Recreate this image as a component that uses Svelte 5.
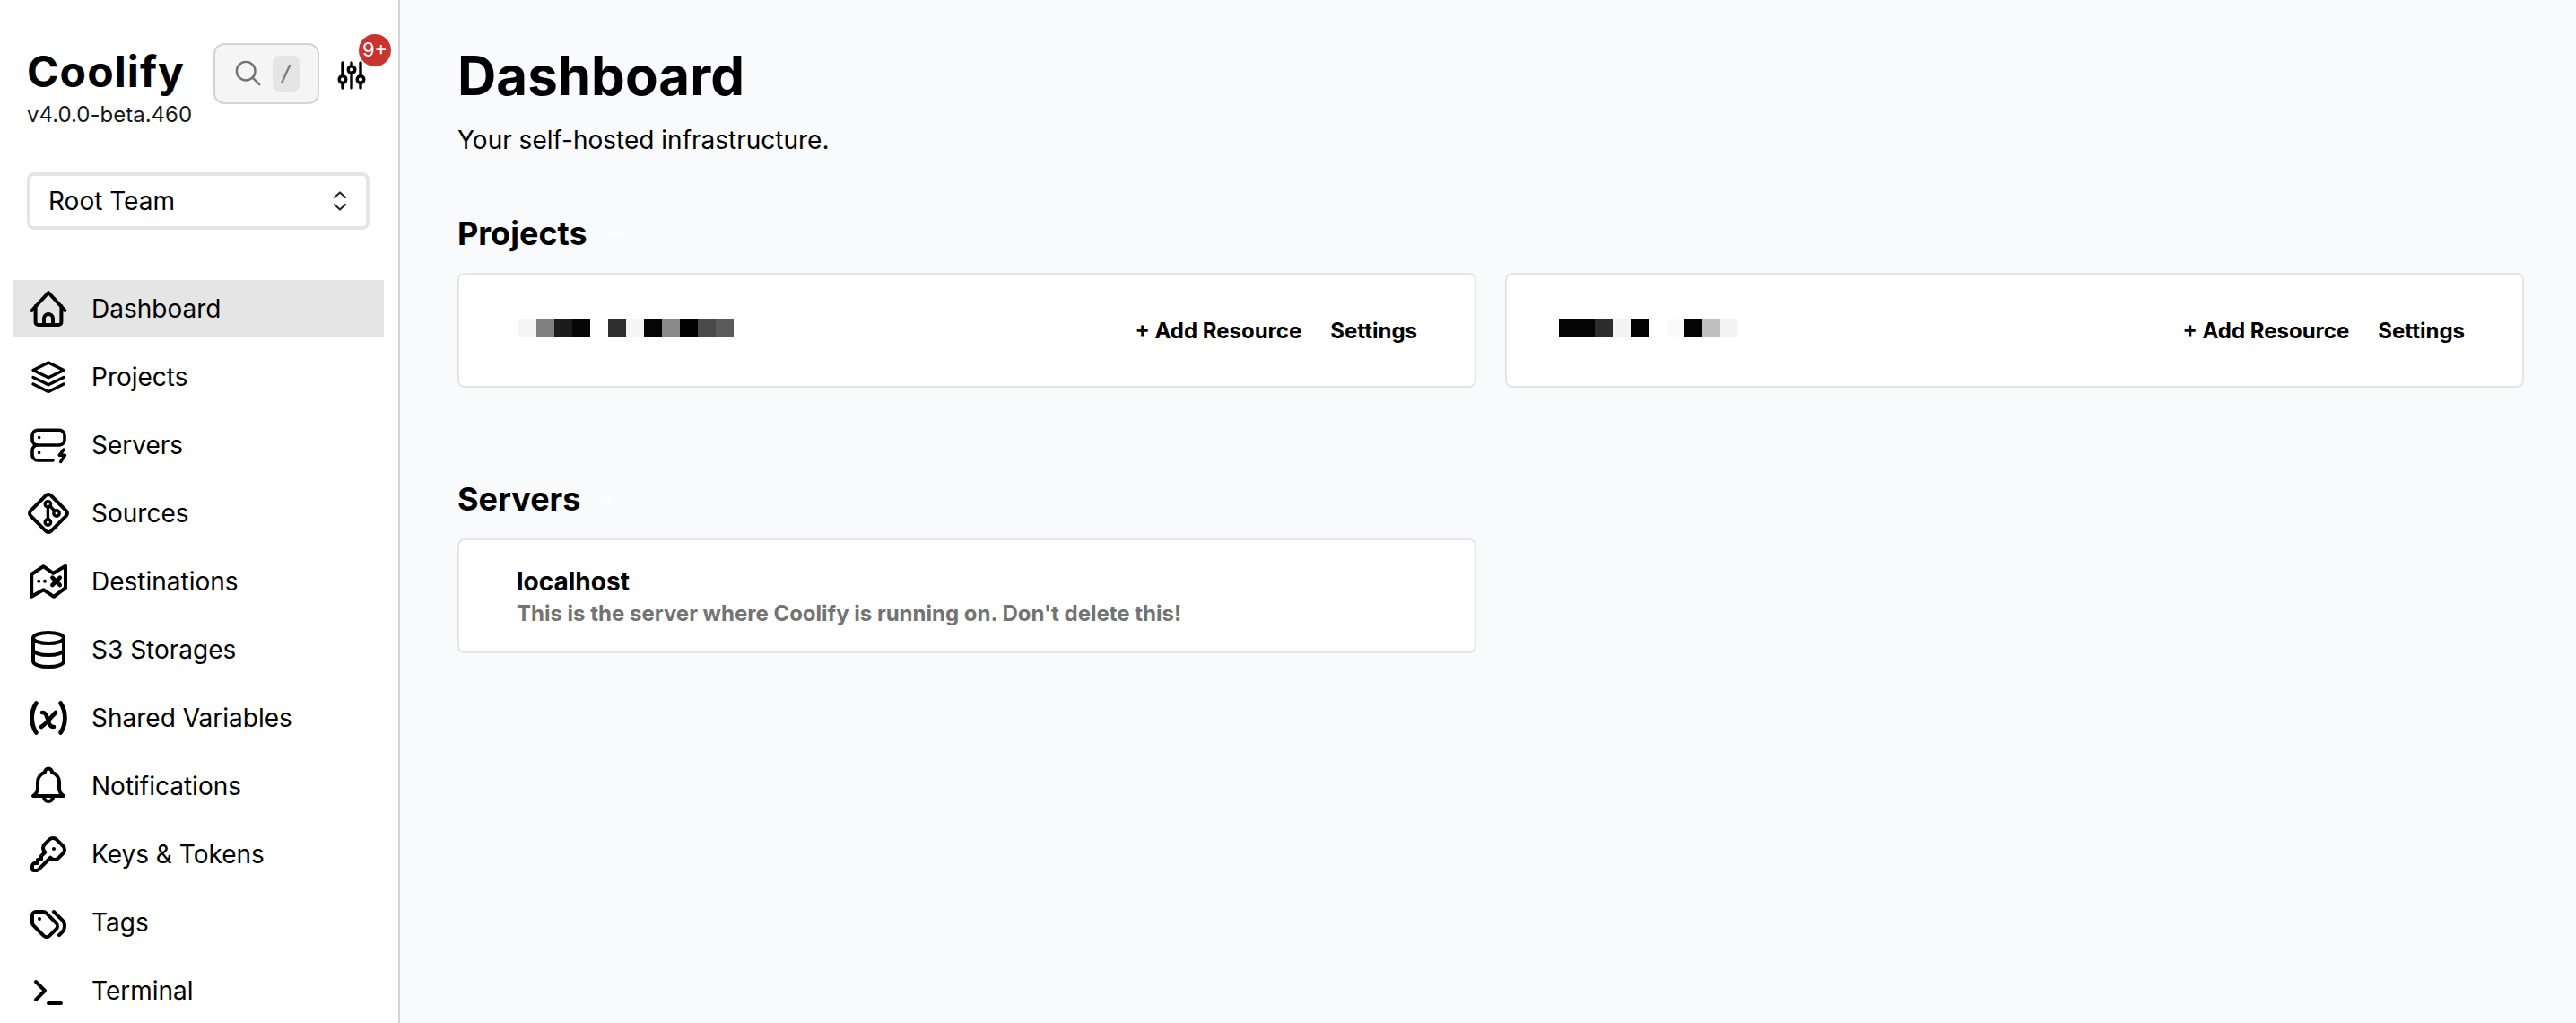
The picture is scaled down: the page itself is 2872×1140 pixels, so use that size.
<script>
  const projectCards = [
    { offset: 2, cells: ['#f5f5f5', '#808080', '#1c1c1c', '#060606', '#ffffff', '#2e2e2e', '#f5f5f5', '#060606', '#8a8a8a', '#020202', '#4a4a4a', '#5a5a5a'] },
    { offset: -6, cells: ['#050505', '#050505', '#2c2c2c', '#f4f4f4', '#030303', '#ffffff', '#fafafa', '#040404', '#c0c0c0', '#f4f4f4'] }
  ];

  const menu = [
    { label: 'Dashboard', icon: 'home', active: true },
    { label: 'Projects', icon: 'layers' },
    { label: 'Servers', icon: 'server' },
    { label: 'Sources', icon: 'git' },
    { label: 'Destinations', icon: 'map' },
    { label: 'S3 Storages', icon: 'db' },
    { label: 'Shared Variables', icon: 'vars' },
    { label: 'Notifications', icon: 'bell' },
    { label: 'Keys & Tokens', icon: 'key' },
    { label: 'Tags', icon: 'tags' },
    { label: 'Terminal', icon: 'terminal' }
  ];
</script>

<div class="page">
  <aside class="sidebar">
    <div class="brand-row">
      <div class="brand">
        <div class="logo">Coolify</div>
        <div class="version">v4.0.0-beta.460</div>
      </div>
      <div class="search">
        <svg class="search-icon" viewBox="0 0 32 32" fill="none" stroke="currentColor" stroke-width="2.6" stroke-linecap="round">
          <circle cx="13" cy="13" r="11" />
          <path d="M21 21L29 29" />
        </svg>
        <kbd>/</kbd>
      </div>
      <div class="settings">
        <svg viewBox="0 0 32 32" fill="none" stroke="currentColor" stroke-width="3.4" stroke-linecap="round">
          <path d="M6 2v14M6 25v5M16 2v3M16 14v16M26 2v14M26 25v5" />
          <circle cx="6" cy="20.500" r="3.800" />
          <circle cx="16" cy="9.500" r="3.800" />
          <circle cx="26" cy="20.500" r="3.800" />
        </svg>
        <span class="badge">9+</span>
      </div>
    </div>

    <div class="team-select">
      <span>Root Team</span>
      <svg viewBox="0 0 16 24" fill="none" stroke="currentColor" stroke-width="2.2" stroke-linecap="round" stroke-linejoin="round">
        <path d="M2 8l6-5.500L14 8M2 16l6 5.500L14 16" />
      </svg>
    </div>

    <nav class="menu">
      {#each menu as item}
        <div class="menu-item" class:active={item.active}>
          <svg class="menu-icon" viewBox="0 0 24 24" fill="none" stroke="currentColor" stroke-width="2" stroke-linecap="round" stroke-linejoin="round">
            {#if item.icon === 'home'}
              <path d="M2.800 13L12 3l9.200 10M4.800 10.500V19.500a1.500 1.500 0 0 0 1.500 1.500h11.400a1.500 1.500 0 0 0 1.500-1.500V10.500" />
              <path d="M9.500 21v-3.500a2.500 2.500 0 0 1 5 0V21" />
            {:else if item.icon === 'layers'}
              <g stroke-width="1.700">
                <path d="M12 4l8.500 4.200L12 12.400 3.500 8.200z" />
                <path d="M3.500 12.200l8.500 4.200 8.500-4.200M3.500 16l8.500 4.200 8.500-4.200" />
              </g>
            {:else if item.icon === 'server'}
              <g stroke-width="1.800">
                <rect x="3" y="3.600" width="18" height="8.400" rx="3" />
                <path d="M14.500 20.500H6a3 3 0 0 1-3-3V15a3 3 0 0 1 3-3" />
                <path d="M6.800 7.800h.01M6.800 16.200h.01" />
                <path d="M20.500 14.600l-2.300 3h3l-2.300 3.600" />
              </g>
            {:else if item.icon === 'git'}
              <rect x="4" y="4" width="16" height="16" rx="2" transform="rotate(45 12 12)" />
              <g stroke-width="1.700">
                <circle cx="11.700" cy="6.900" r="1.600" />
                <circle cx="16.500" cy="12" r="1.600" />
                <circle cx="11.700" cy="17" r="1.600" />
                <path d="M11.700 8.500v6.900M12.900 8l2.600 2.700" />
              </g>
            {:else if item.icon === 'map'}
              <path d="M2.600 8L9.200 3.600l5.500 3.800 6.800-4v12.200L15 20.400l-5.800-3.800-6.600 3.800z" />
              <path d="M6.600 11.900h.01M10 11.900h.01" />
              <path d="M14.200 9.800l4.200 4.200M18.400 9.800l-4.200 4.200" stroke-width="2.300" />
            {:else if item.icon === 'db'}
              <ellipse cx="12" cy="5.500" rx="8.500" ry="3" />
              <path d="M3.500 5.500v13c0 1.700 3.800 3 8.500 3s8.500-1.300 8.500-3v-13" />
              <path d="M3.500 12c0 1.700 3.800 3 8.500 3s8.500-1.300 8.500-3" />
            {:else if item.icon === 'vars'}
              <g stroke-width="2.400">
                <path d="M5.200 3.800C2 8.500 2 15.500 5.200 20.200M18.800 3.800c3.200 4.700 3.200 11.700 0 16.400" />
                <path d="M8.500 9c1.600 0 2 .5 2.500 2l1.400 4c.5 1.500 1 2 2.600 2M8 17c3-2 5-5 8-8" stroke-width="2.300" />
              </g>
            {:else if item.icon === 'bell'}
              <path d="M3.500 17.500h17c-1.600-1-2.500-2.600-2.500-4.500v-3a6 6 0 0 0-4-5.700 2 2 0 0 0-4 0A6 6 0 0 0 6 10v3c0 1.900-.9 3.500-2.500 4.500z" />
              <path d="M9.500 17.500v.5a2.500 2.500 0 0 0 5 0v-.5" />
            {:else if item.icon === 'key'}
              <path d="M16.555 3.843l3.602 3.602a2.877 2.877 0 0 1 0 4.069l-2.643 2.643a2.877 2.877 0 0 1-4.069 0l-.301-.301-6.558 6.558a2 2 0 0 1-1.239.578l-.175.008h-1.172a1 1 0 0 1-.993-.883l-.007-.117v-1.172a2 2 0 0 1 .467-1.284l.119-.119.415-.415h2v-2h2v-2l2.144-2.144-.301-.301a2.877 2.877 0 0 1 0-4.069l2.643-2.643a2.877 2.877 0 0 1 4.069 0z" />
              <path d="M15 9h.01" />
            {:else if item.icon === 'tags'}
              <path d="M3 8v4.172a2 2 0 0 0 .586 1.414l5.710 5.710a2.410 2.410 0 0 0 3.408 0l3.592-3.592a2.410 2.410 0 0 0 0-3.408l-5.710-5.710a2 2 0 0 0-1.414-.586h-4.172a2 2 0 0 0-2 2z" />
              <path d="M18 19l1.592-1.592a4.820 4.820 0 0 0 0-6.816l-4.592-4.592" />
              <path d="M7 10h-.01" />
            {:else if item.icon === 'terminal'}
              <path d="M5 7l5 5-5 5" />
              <path d="M12 19h7" />
            {/if}
          </svg>
          <span>{item.label}</span>
        </div>
      {/each}
    </nav>
  </aside>

  <main class="content">
    <h1>Dashboard</h1>
    <p class="subtitle">Your self-hosted infrastructure.</p>

    <section class="projects">
      <div class="section-title">
        <h2>Projects</h2>
        <svg class="plus" viewBox="0 0 20 20" fill="none" stroke="currentColor" stroke-width="1.500"><path d="M10 2v16M2 10h16" /></svg>
      </div>
      <div class="grid">
        {#each projectCards as card}
          <div class="card project">
            <div class="redacted" style="margin-left: {card.offset}px">
              {#each card.cells as color}
                <i style="background: {color}"></i>
              {/each}
            </div>
            <div class="actions">
              <span>+ Add Resource</span>
              <span>Settings</span>
            </div>
          </div>
        {/each}
      </div>
    </section>

    <section class="servers">
      <div class="section-title">
        <h2>Servers</h2>
        <svg class="plus" viewBox="0 0 20 20" fill="none" stroke="currentColor" stroke-width="1.500"><path d="M10 2v16M2 10h16" /></svg>
      </div>
      <div class="grid">
        <div class="card server">
          <div class="server-name">localhost</div>
          <div class="server-desc">This is the server where Coolify is running on. Don't delete this!</div>
        </div>
      </div>
    </section>
  </main>
</div>

<style>
  :global(body) {
    margin: 0;
    background: #f9fafb;
  }

  .page {
    display: flex;
    height: 1140px;
    overflow: hidden;
    font-family: Inter, "Liberation Sans", sans-serif;
    color: #000;
  }

  .sidebar {
    width: 446px;
    flex: none;
    box-sizing: border-box;
    background: #fff;
    border-right: 2px solid #d4d4d4;
    padding: 48px 16px 0 14px;
  }

  .brand-row {
    display: flex;
    align-items: flex-start;
    padding-left: 17px;
    height: 144px;
  }

  .brand {
    width: 207px;
    flex: none;
    padding-top: 5px;
  }

  .logo {
    font-size: 48px;
    font-weight: 700;
    line-height: 54px;
    letter-spacing: 1.1px;
    margin-left: -1px;
  }

  .version {
    font-size: 24px;
    line-height: 34px;
    color: #171717;
    margin: 4px 0 0 -1px;
  }

  .search {
    width: 118px;
    height: 68px;
    flex: none;
    box-sizing: border-box;
    display: flex;
    align-items: center;
    gap: 12px;
    padding-left: 22px;
    background: #f5f5f5;
    border: 2px solid #d4d4d4;
    border-radius: 12px;
    color: #737373;
  }

  .search-icon {
    width: 30px;
    height: 30px;
    flex: none;
  }

  kbd {
    width: 30px;
    height: 40px;
    display: flex;
    align-items: center;
    justify-content: center;
    background: #e5e5e5;
    border-radius: 8px;
    font-family: "DejaVu Sans Mono", monospace;
    font-size: 24px;
    font-style: normal;
    color: #737373;
  }

  .settings {
    position: relative;
    margin: 20px 0 0 20px;
    width: 32px;
    height: 32px;
  }

  .settings svg {
    display: block;
    width: 32px;
    height: 32px;
  }

  .badge {
    position: absolute;
    left: 24px;
    top: -30px;
    width: 36px;
    height: 36px;
    border-radius: 50%;
    background: #c9352e;
    color: #fff;
    font-size: 22px;
    line-height: 34px;
    text-align: center;
  }

  .team-select {
    box-sizing: border-box;
    width: 382px;
    height: 64px;
    margin-left: 16px;
    display: flex;
    align-items: center;
    justify-content: space-between;
    padding: 0 21px 0 20px;
    background: #fff;
    border: 4px solid #e5e5e5;
    border-radius: 8px;
    font-size: 28px;
    color: #000;
  }

  .team-select svg {
    width: 16px;
    height: 24px;
    color: #262626;
  }

  .menu {
    margin-top: 56px;
    display: flex;
    flex-direction: column;
    gap: 12px;
  }

  .menu-item {
    height: 64px;
    width: 414px;
    display: flex;
    align-items: center;
    gap: 24px;
    padding-left: 16px;
    box-sizing: border-box;
    font-size: 28px;
    color: #000;
  }

  .menu-item.active {
    background: #e5e5e5;
  }

  .menu-icon {
    width: 48px;
    height: 48px;
    flex: none;
  }

  .content {
    flex: 1;
    min-width: 0;
    padding: 0 58px 0 64px;
  }

  h1 {
    margin: 48px 0 0;
    font-size: 60px;
    line-height: 72px;
    font-weight: 700;
  }

  .subtitle {
    margin: 16px 0 0;
    font-size: 28px;
    line-height: 40px;
  }

  .section-title {
    display: flex;
    align-items: center;
    gap: 22px;
    height: 56px;
  }

  h2 {
    margin: 0;
    font-size: 36px;
    line-height: 56px;
    font-weight: 700;
  }

  .plus {
    width: 20px;
    height: 20px;
    color: #fff;
  }

  .projects {
    margin-top: 56px;
  }

  .servers {
    margin-top: 96px;
  }

  .grid {
    display: grid;
    grid-template-columns: 1fr 1fr;
    gap: 32px;
    margin-top: 16px;
  }

  .card {
    box-sizing: border-box;
    height: 128px;
    background: #fff;
    border: 2px solid #e5e5e5;
    border-radius: 8px;
    padding: 0 64px;
  }

  .project {
    display: flex;
    align-items: center;
    justify-content: space-between;
  }

  .redacted {
    display: flex;
    height: 20px;
    margin-top: -4px;
  }

  .redacted i {
    display: block;
    width: 20px;
    height: 20px;
  }

  .actions {
    display: flex;
    gap: 32px;
    font-size: 24px;
    font-weight: 700;
  }

  .server {
    display: flex;
    flex-direction: column;
    justify-content: center;
  }

  .server-name {
    font-size: 28px;
    font-weight: 700;
    line-height: 40px;
  }

  .server-desc {
    font-size: 24px;
    font-weight: 700;
    line-height: 32px;
    color: #737373;
  }
</style>
